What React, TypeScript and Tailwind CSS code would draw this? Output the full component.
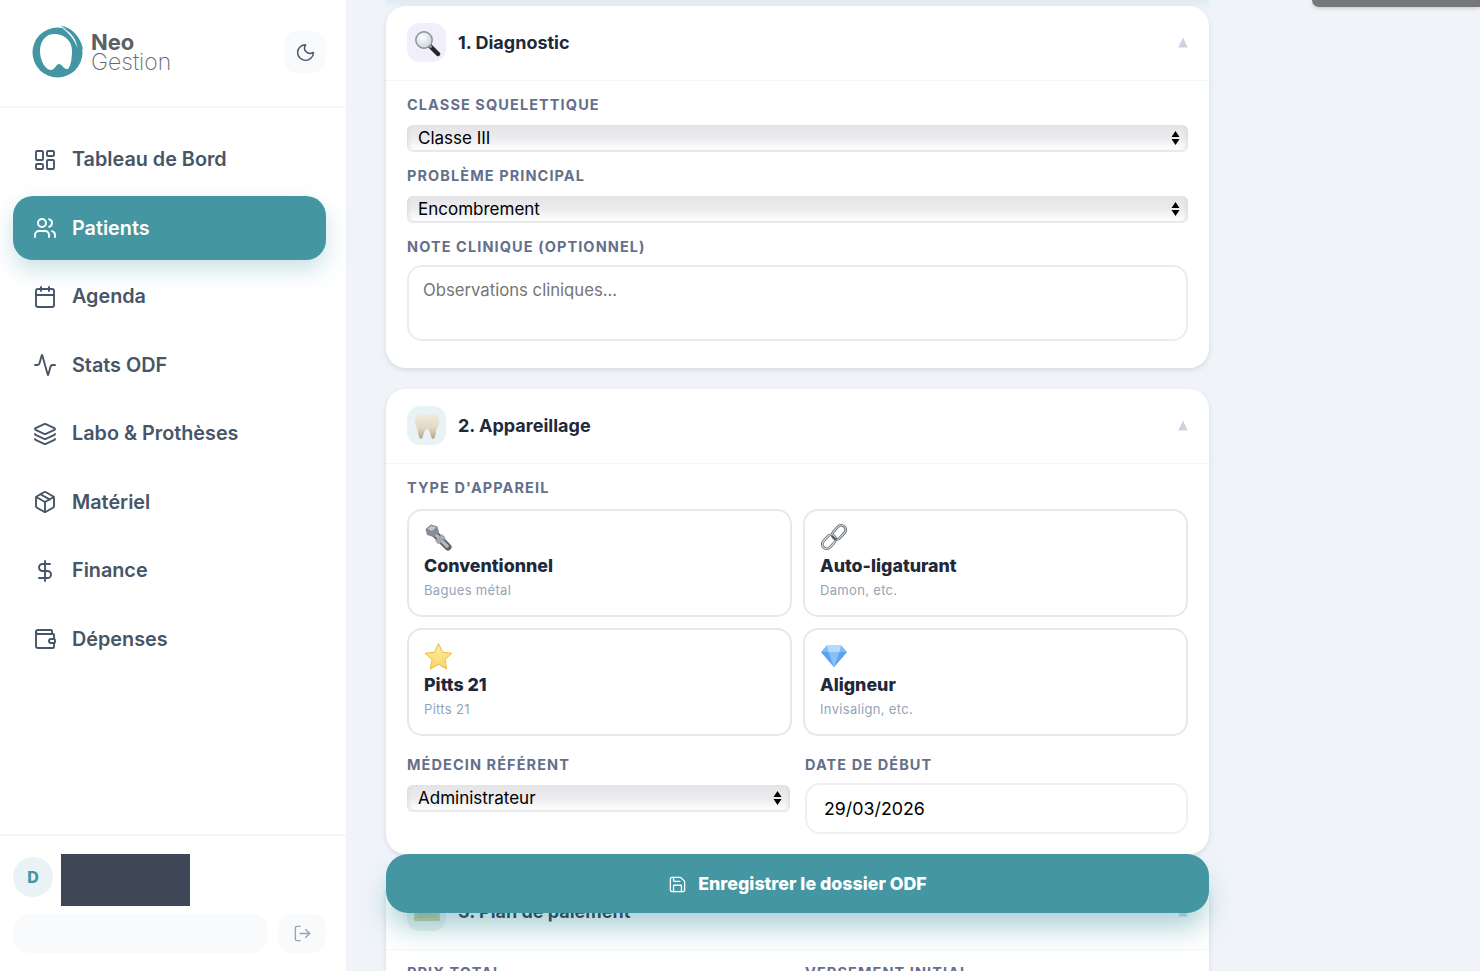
import React from 'react';
import { Activity, Calendar, DollarSign, Layers, LayoutDashboard, LogOut, Moon, Package, Save, Users, Wallet } from 'lucide-react';

const navItems = [
  { label: 'Tableau de Bord', icon: LayoutDashboard },
  { label: 'Patients', icon: Users, active: true },
  { label: 'Agenda', icon: Calendar },
  { label: 'Stats ODF', icon: Activity },
  { label: 'Labo & Prothèses', icon: Layers },
  { label: 'Matériel', icon: Package },
  { label: 'Finance', icon: DollarSign },
  { label: 'Dépenses', icon: Wallet },
];

const Logo = () => (
  <svg width="54" height="54" viewBox="0 0 54 54" className="shrink-0">
    <circle cx="26.5" cy="27.5" r="25" fill="#4496a3" />
    <path d="M25 9C15 8 9 16 9 26c0 9 5 19 11 19 4 0 5-6 8-6s5 6 9 5c3-3 4-12 4-18 0-8-5-16-16-17z" fill="#fff" />
    <path d="M29 .5C40 2 50 11 52.500 26 48 15 40 6 29 .5z" fill="#4496a3" />
    <path d="M31 3c8 3 14 10 15.500 20C43 14 38 8 31 3z" fill="#fff" />
  </svg>
);

const MagnifierEmoji = () => (
  <svg width="28" height="28" viewBox="0 0 28 28">
    <defs>
      <radialGradient id="lens" cx="40%" cy="35%">
        <stop offset="0%" stopColor="#ffffff" />
        <stop offset="100%" stopColor="#d5dfe8" />
      </radialGradient>
    </defs>
    <path d="M17 17l8 8" stroke="#26282c" strokeWidth="4.500" strokeLinecap="round" />
    <path d="M16 16l2.500 2.500" stroke="#9aa0a6" strokeWidth="2.500" />
    <circle cx="11" cy="11" r="8.200" fill="url(#lens)" stroke="#8b9097" strokeWidth="1.400" />
  </svg>
);

const ToothEmoji = () => (
  <svg width="26" height="28" viewBox="0 0 26 28">
    <defs>
      <linearGradient id="tooth" x1="0" y1="0" x2="0" y2="1">
        <stop offset="0%" stopColor="#f1ecdf" />
        <stop offset="55%" stopColor="#e2d8c4" />
        <stop offset="100%" stopColor="#b3a585" />
      </linearGradient>
    </defs>
    <path d="M7 2c2.500 0 4 1.200 6 1.200S16.500 2 19 2c4 0 6 3 6 7 0 5-2.500 7-3 11-.4 3-1.200 7-3.200 7-2.300 0-2.300-10-5.800-10S9.500 27 7.200 27c-2 0-2.800-4-3.200-7-.5-4-3-6-3-11 0-4 2-7 6-7z" fill="url(#tooth)" />
  </svg>
);

const BoltEmoji = () => (
  <svg width="28" height="28" viewBox="0 0 28 28">
    <path d="M10 10l14 14" stroke="#5f666e" strokeWidth="7" strokeLinecap="round" />
    <path d="M12 12l11 11" stroke="#b4bac1" strokeWidth="3.500" strokeLinecap="round" strokeDasharray="1.600 1.400" />
    <path d="M1.500 6l5.500-4.500 6.500 2 1.500 5.500-5.500 5-6.500-2z" fill="#858c95" />
    <path d="M3.500 5.500L7.500 3l4.500 1.500-4 3.500z" fill="#c3c8ce" />
    <path d="M11 18l7-7 3.500 3.500-7 7z" fill="#a3aab2" />
  </svg>
);

const LinkEmoji = () => (
  <svg width="28" height="28" viewBox="0 0 28 28" fill="none">
    <rect x="14.500" y="1.500" width="9" height="15.500" rx="4.500" transform="rotate(42 19 9.250)" stroke="#62686f" strokeWidth="2.800" />
    <rect x="14.500" y="1.500" width="9" height="15.500" rx="4.500" transform="rotate(42 19 9.250)" stroke="#dfe2e5" strokeWidth="1" />
    <rect x="4.500" y="11" width="9" height="15.500" rx="4.500" transform="rotate(42 9 18.750)" stroke="#6f757c" strokeWidth="2.800" />
    <rect x="4.500" y="11" width="9" height="15.500" rx="4.500" transform="rotate(42 9 18.750)" stroke="#e6e8ea" strokeWidth="1" />
    <path d="M12 13l4 4" stroke="#54595f" strokeWidth="2" />
  </svg>
);

const StarEmoji = () => (
  <svg width="29" height="28" viewBox="0 0 29 28">
    <defs>
      <linearGradient id="star" x1="0" y1="0" x2="0" y2="1">
        <stop offset="0%" stopColor="#fdeea8" />
        <stop offset="100%" stopColor="#fad564" />
      </linearGradient>
    </defs>
    <path d="M14.500 1.500l4 8.700 9.300 1.100-6.900 6.400 1.800 9.300-8.200-4.600-8.200 4.600 1.800-9.300-6.900-6.400 9.300-1.100z" fill="url(#star)" stroke="#efb93f" strokeWidth="1" strokeLinejoin="round" />
  </svg>
);

const GemEmoji = () => (
  <svg width="28" height="26" viewBox="0 0 28 26">
    <path d="M7 2h14l6 7-13 15L1 9z" fill="#7dbcf4" />
    <path d="M1 9h26L14 24z" fill="#5ba3ec" />
    <path d="M8.500 9h11L14 24z" fill="#86c2f8" />
    <path d="M7 2h14l-1.500 7h-11z" fill="#b3dcfc" />
  </svg>
);

const BanknoteEmoji = () => (
  <svg width="26" height="20" viewBox="0 0 26 20">
    <rect x="0" y="1" width="26" height="18" rx="1.500" fill="#c9c79c" />
    <rect x="3" y="4" width="20" height="12" fill="#b6c29a" />
  </svg>
);

const Label = ({ children }: { children: React.ReactNode }) => (
  <div className="text-[14.500px] leading-[18px] font-bold uppercase tracking-[0.075em] text-[#64708a]">{children}</div>
);

const NativeSelect = ({ value }: { value: string }) => (
  <div className="relative">
    <select
      defaultValue={value}
      className="block w-full h-[27px] appearance-none rounded-[6px] border-b-2 border-[#e8e9ec] bg-gradient-to-b from-[#e5e5e7] via-[#ebebed] to-white pl-[11px] pt-[1px] text-[17px] text-black outline-none shadow-[inset_4px_0_4px_-3px_#d6d7da,inset_-4px_0_4px_-3px_#d6d7da]"
    >
      <option>{value}</option>
    </select>
    <svg width="9" height="16" viewBox="0 0 9 16" className="absolute top-[5px] right-[8px]">
      <path d="M4.500 1L8.500 7H.5zM4.500 15L.5 9h8z" fill="#000" />
    </svg>
  </div>
);

const CardHeader = ({ icon, iconBg, title }: { icon: React.ReactNode; iconBg: string; title: string }) => (
  <div className="flex items-center h-[75px] px-[21px] pb-[1px] border-b border-[#f3f5f8]">
    <div className={`flex items-center justify-center w-[39px] h-[39px] rounded-[13px] ${iconBg}`}>{icon}</div>
    <div className="ml-[12px] flex-1 text-[18px] font-bold text-[#1e293b]">{title}</div>
    <svg width="10" height="11" viewBox="0 0 10 11">
      <path d="M5 .5L9.800 10.500H.2z" fill="#cbd5e1" />
    </svg>
  </div>
);

const Tile = ({ icon, title, sub }: { icon: React.ReactNode; title: string; sub: string }) => (
  <div className="h-[108px] rounded-[15px] border-2 border-[#e5e8ef] bg-white pl-[15px] pt-[12px]">
    <div className="h-[28px] flex items-center">{icon}</div>
    <div className="mt-[2px] text-[17.800px] leading-[26px] font-extrabold text-[#1e293b]">{title}</div>
    <div className="mt-[1px] text-[13px] leading-[20px] tracking-[0.025em] text-[#94a3b8]">{sub}</div>
  </div>
);

export default function App() {
  return (
    <div className="flex w-[1480px] h-[971px] overflow-hidden bg-[#f0f4f9] font-['Inter',sans-serif]">
      <aside className="flex flex-col w-[346px] h-full shrink-0 bg-white">
        <div className="flex items-center justify-between h-[108px] pl-[31px] pr-[20px] border-b-2 border-[#f6f7f9]">
          <div className="flex items-center gap-[6px] -mt-[3px]">
            <Logo />
            <div className="text-[#666a6e]">
              <div className="text-[22px] leading-[20px] font-bold text-[#5c5f63]">Neo</div>
              <div className="text-[23px] leading-[20px] font-extralight">Gestion</div>
            </div>
          </div>
          <button className="flex items-center justify-center w-[42px] h-[42px] -mt-[2px] rounded-[14px] bg-[#f8fafc] text-[#475569]">
            <Moon size={21} strokeWidth={1.700} />
          </button>
        </div>

        <nav className="flex-1 flex flex-col gap-[4.500px] pt-[19.500px] pl-[13px] pr-[20px]">
          {navItems.map((item) => {
            const Icon = item.icon;
            return (
              <div
                key={item.label}
                className={`flex items-center h-[64px] gap-[15px] pl-[20px] rounded-[20px] text-[19.800px] font-semibold ${
                  item.active
                    ? 'bg-[#4496a3] text-white shadow-[0_10px_22px_rgba(68,150,163,0.28)]'
                    : 'text-[#475569]'
                }`}
              >
                <Icon size={24} strokeWidth={1.900} />
                <span className="pt-[1px]">{item.label}</span>
              </div>
            );
          })}
        </nav>

        <div className="h-[137px] px-[13px] pr-[20px] border-t-2 border-[#f3f5f8]">
          <div className="flex items-start h-[78px]">
            <div className="flex items-center justify-center w-[40px] h-[40px] mt-[21px] rounded-full bg-[#e9f3f5] text-[16px] font-extrabold text-[#4496a3]">
              D
            </div>
            <div className="w-[129px] h-[52px] mt-[18px] ml-[8px] bg-[#3f4756]" />
          </div>
          <div className="flex gap-[10px]">
            <div className="flex-1 h-[39px] rounded-[16px] bg-[#f8fafc]" />
            <button className="flex items-center justify-center w-[48px] h-[39px] rounded-[14px] bg-[#f8fafc] text-[#94a3b8]">
              <LogOut size={19} strokeWidth={1.700} />
            </button>
          </div>
        </div>
      </aside>

      <main className="relative flex-1 h-full overflow-hidden pl-[40px]">
        <div className="w-[823px] h-[6px] bg-gradient-to-b from-[#e0ebf1] to-[#e9f0f5] shadow-[0_0_6px_#e4edf2]" />

        <div className="flex flex-col gap-[21px] w-[823px]">
          <section className="h-[362px] rounded-[20px] bg-white shadow-[0_2px_5px_rgba(100,116,139,0.2)]">
            <CardHeader icon={<MagnifierEmoji />} iconBg="bg-[#f3eefc]" title="1. Diagnostic" />
            <div className="px-[21px] pt-[15px]">
              <Label>Classe squelettique</Label>
              <div className="mt-[11px]">
                <NativeSelect value="Classe III" />
              </div>
              <div className="mt-[15px]">
                <Label>Problème principal</Label>
              </div>
              <div className="mt-[11px]">
                <NativeSelect value="Encombrement" />
              </div>
              <div className="mt-[15px]">
                <Label>Note clinique (optionnel)</Label>
              </div>
              <textarea
                placeholder="Observations cliniques..."
                className="block w-full h-[76px] mt-[9px] resize-none rounded-[15px] border-2 border-[#e9ecf1] bg-white px-[14px] py-[11px] text-[16.700px] leading-[24px] outline-none placeholder:text-[#757575]"
              />
            </div>
          </section>

          <section className="h-[465px] rounded-[20px] bg-white shadow-[0_2px_5px_rgba(100,116,139,0.2)]">
            <CardHeader icon={<ToothEmoji />} iconBg="bg-[#e9f3f5]" title="2. Appareillage" />
            <div className="px-[21px] pt-[15px]">
              <Label>Type d'appareil</Label>
              <div className="grid grid-cols-2 gap-x-[11px] gap-y-[11px] mt-[12px]">
                <Tile icon={<BoltEmoji />} title="Conventionnel" sub="Bagues métal" />
                <Tile icon={<LinkEmoji />} title="Auto-ligaturant" sub="Damon, etc." />
                <Tile icon={<StarEmoji />} title="Pitts 21" sub="Pitts 21" />
                <Tile icon={<GemEmoji />} title="Aligneur" sub="Invisalign, etc." />
              </div>
              <div className="grid grid-cols-2 gap-x-[15px] mt-[20px]">
                <div>
                  <Label>Médecin référent</Label>
                  <div className="mt-[11px]">
                    <NativeSelect value="Administrateur" />
                  </div>
                </div>
                <div>
                  <Label>Date de début</Label>
                  <input
                    type="text"
                    defaultValue="29/03/2026"
                    className="block w-full h-[51px] mt-[9px] rounded-[15px] border-2 border-[#eef0f4] bg-white pl-[17px] text-[17.800px] text-black outline-none"
                  />
                </div>
              </div>
            </div>
          </section>

          <section className="h-[200px] rounded-[20px] bg-white shadow-[0_2px_5px_rgba(100,116,139,0.2)]">
            <CardHeader icon={<BanknoteEmoji />} iconBg="bg-[#e8f3ee]" title="3. Plan de paiement" />
            <div className="grid grid-cols-2 gap-x-[15px] px-[21px] pt-[14px]">
              <Label>Prix total</Label>
              <Label>Versement initial</Label>
            </div>
          </section>
        </div>

        {/* Barre d'enregistrement flottante */}
        <button className="absolute left-[40px] top-[854px] flex items-center justify-center gap-[11px] pt-[1px] w-[823px] h-[59px] rounded-[22px] bg-[#4496a3] text-[17.800px] font-extrabold text-white shadow-[0_18px_28px_-4px_rgba(68,150,163,0.45)]">
          <Save size={19} strokeWidth={1.700} />
          Enregistrer le dossier ODF
        </button>

        <div className="absolute right-0 top-0 w-[168px] h-[7px] rounded-bl-[14px] bg-[#757779] shadow-[0_1px_4px_rgba(0,0,0,0.2)]" />
      </main>
    </div>
  );
}
